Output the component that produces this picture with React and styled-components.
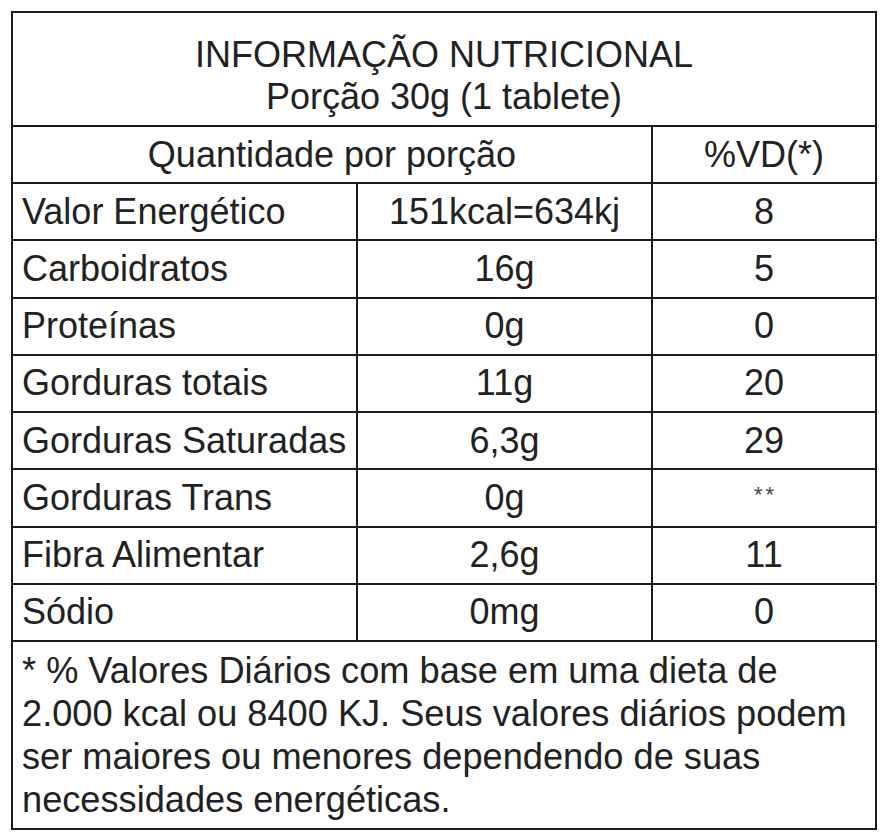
import React from "react";
import styled, { createGlobalStyle } from "styled-components";

const Global = createGlobalStyle`
  html, body { margin: 0; padding: 0; background: #ffffff; }
  body { font-family: "Liberation Sans", Arial, sans-serif; color: #222; }
`;

const Page = styled.div`
  padding: 11px 0 0 11px;
`;

const Frame = styled.div`
  width: 866px;
  box-sizing: border-box;
  border: 2px solid #1c1c1c;
  display: grid;
  grid-template-columns: 345px 295px 1fr;
  grid-template-rows: 114px 57px repeat(8, 57.25px) auto;
`;

const Cell = styled.div`
  box-sizing: border-box;
  display: flex;
  align-items: center;
  justify-content: ${(p) => (p.$align === "left" ? "flex-start" : "center")};
  padding-left: ${(p) => (p.$align === "left" ? "9px" : "0")};
  border-right: ${(p) => (p.$last ? "none" : "2px solid #1c1c1c")};
  border-bottom: 2px solid #1c1c1c;
  grid-column: ${(p) => p.$span || "auto"};
  font-size: 36px;
  color: #222;
  white-space: nowrap;
`;

const Title = styled.div`
  grid-column: 1 / span 3;
  border-bottom: 2px solid #1c1c1c;
  display: flex;
  flex-direction: column;
  align-items: center;
  padding-top: 21px;
  box-sizing: border-box;
  font-size: 36px;
  line-height: 42px;
  color: #222;
`;

const Stars = styled.span`
  font-size: 22px;
  letter-spacing: 3px;
  padding-left: 3px;
  color: #444;
  transform: translateY(-3px);
`;

const Footer = styled.div`
  grid-column: 1 / span 3;
  padding: 7px 9px 7px 9px;
  font-size: 36.2px;
  line-height: 43px;
  color: #222;
`;

const rows = [
  ["Valor Energético", "151kcal=634kj", "8"],
  ["Carboidratos", "16g", "5"],
  ["Proteínas", "0g", "0"],
  ["Gorduras totais", "11g", "20"],
  ["Gorduras Saturadas", "6,3g", "29"],
  ["Gorduras Trans", "0g", "**"],
  ["Fibra Alimentar", "2,6g", "11"],
  ["Sódio", "0mg", "0"],
];

export default function App() {
  return (
    <Page>
      <Global />
      <Frame>
        <Title>
          <span>INFORMAÇÃO NUTRICIONAL</span>
          <span>Porção 30g (1 tablete)</span>
        </Title>
        <Cell $span="1 / span 2">Quantidade por porção</Cell>
        <Cell $last>%VD(*)</Cell>
        {rows.map(([name, qty, vd]) => (
          <React.Fragment key={name}>
            <Cell $align="left">{name}</Cell>
            <Cell>{qty}</Cell>
            <Cell $last>{vd === "**" ? <Stars>**</Stars> : vd}</Cell>
          </React.Fragment>
        ))}
        <Footer>
          * % Valores Diários com base em uma dieta de
          <br />
          2.000 kcal ou 8400 KJ. Seus valores diários podem
          <br />
          ser maiores ou menores dependendo de suas
          <br />
          necessidades energéticas.
        </Footer>
      </Frame>
    </Page>
  );
}
